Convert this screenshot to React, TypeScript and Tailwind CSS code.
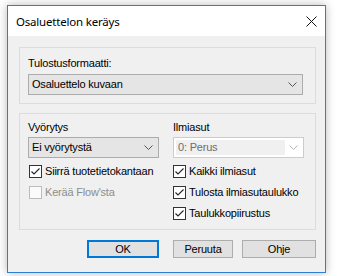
import React from "react";

const body = { fontFamily: '"Liberation Sans", Arial, sans-serif' };
const caption = { fontFamily: '"Noto Sans", "Open Sans", sans-serif' };

function Chevron({ disabled }: { disabled?: boolean }) {
  return (
    <svg width="9" height="5" viewBox="0 0 9 5" className="shrink-0">
      <path
        d="M0.5 0.5 L4.5 4.5 L8.5 0.5"
        fill="none"
        stroke={disabled ? "#b5b5b5" : "#555555"}
        strokeWidth="1"
      />
    </svg>
  );
}

function Select({ value, width }: { value: string; width: string }) {
  return (
    <div
      className={`flex h-[21px] items-center justify-between border border-[#acacac] bg-[#e5e5e5] pl-[3px] pr-[5px] text-black ${width}`}
    >
      <span className="whitespace-nowrap leading-[15px]">{value}</span>
      <Chevron />
    </div>
  );
}

function Check({ label, checked, disabled }: { label: string; checked?: boolean; disabled?: boolean }) {
  return (
    <div className="flex h-[21px] items-center gap-[3px]">
      <span
        className={`flex h-[13px] w-[13px] shrink-0 items-center justify-center border ${
          disabled ? "border-[#bcbcbc] bg-[#fafafa]" : "border-[#333333] bg-white"
        }`}
      >
        {checked && (
          <svg width="11" height="11" viewBox="0 0 11 11">
            <path d="M1.5 5.5 L4 8 L9.5 2.5" fill="none" stroke="#222" strokeWidth="1.1" />
          </svg>
        )}
      </span>
      <span className={`whitespace-nowrap leading-[15px] ${disabled ? "text-[#8d8d8d]" : "text-black"}`}>
        {label}
      </span>
    </div>
  );
}

function Button({ label, width, primary }: { label: string; width: string; primary?: boolean }) {
  return (
    <div
      className={`flex h-[18px] items-center justify-center bg-[#e1e1e1] leading-[15px] text-black ${width} ${
        primary ? "border-2 border-[#0078d7]" : "border border-[#adadad]"
      }`}
    >
      {label}
    </div>
  );
}

export default function App() {
  return (
    <div
      className="h-[276px] w-[341px] overflow-hidden bg-white pl-[7px] pt-[5px] text-[11px] tracking-[-0.2px]"
      style={body}
    >
      <div className="flex h-[268px] w-[319px] flex-col border border-[#2b7fd4] shadow-[0_0_9px_rgba(0,0,0,0.28)]">
        <div className="flex h-[30px] items-center justify-between bg-white pl-[8px] pr-[8px]">
          <span className="whitespace-nowrap text-[11.5px] leading-[15px] text-black" style={caption}>
            Osaluettelon keräys
          </span>
          <svg width="11" height="11" viewBox="0 0 11 11">
            <path d="M0.5 0.5 L10.5 10.5 M10.5 0.5 L0.5 10.5" stroke="#111" strokeWidth="1" />
          </svg>
        </div>
        <div className="flex flex-1 flex-col bg-[#f0f0f0] pl-[11px] pt-[11px]">
          <div className="flex h-[57px] w-[297px] flex-col border border-[#dcdcdc] pl-[8px] pt-[8px]">
            <span className="leading-[15px] text-black">Tulostusformaatti:</span>
            <div className="mt-[3px]">
              <Select value="Osaluettelo kuvaan" width="w-[275px]" />
            </div>
          </div>

          <div className="mt-[9px] flex h-[117px] w-[297px] gap-[14px] border border-[#dcdcdc] pl-[8px] pt-[6px]">
            <div className="flex w-[131px] flex-col">
              <span className="leading-[15px] text-black">Vyörytys</span>
              <div className="mt-[2px]">
                <Select value="Ei vyörytystä" width="w-[131px]" />
              </div>
              <div className="mt-[3px] flex flex-col pl-[1px]">
                <Check label="Siirrä tuotetietokantaan" checked />
                <Check label="Kerää Flow'sta" disabled />
              </div>
            </div>
            <div className="flex w-[131px] flex-col">
              <span className="leading-[15px] text-black">Ilmiasut</span>
              <div className="mt-[2px] flex h-[21px] w-[131px] items-center border border-[#cccccc] bg-white pl-[2px] pr-[2px]">
                <div className="flex h-[15px] w-[109px] items-center bg-[#f0f0f0] pl-[2px] leading-[15px] text-[#6d6d6d]">
                  0: Perus
                </div>
                <div className="flex flex-1 justify-center">
                  <Chevron disabled />
                </div>
              </div>
              <div className="mt-[3px] flex flex-col">
                <Check label="Kaikki ilmiasut" checked />
                <Check label="Tulosta ilmiasutaulukko" checked />
                <Check label="Taulukkopiirustus" checked />
              </div>
            </div>
          </div>

          <div className="mt-[10px] flex w-[297px] justify-end">
            <Button label="OK" width="w-[72px]" primary />
            <div className="ml-[14px]">
              <Button label="Peruuta" width="w-[60px]" />
            </div>
            <div className="ml-[9px]">
              <Button label="Ohje" width="w-[74px]" />
            </div>
          </div>
        </div>
      </div>
    </div>
  );
}
